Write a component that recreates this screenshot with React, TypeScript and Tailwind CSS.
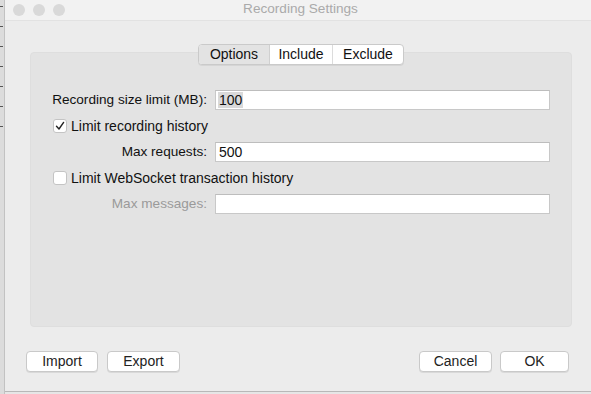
import React from "react";

const font = { fontFamily: '"Liberation Sans", Arial, Helvetica, sans-serif' };

function Btn({ label, w }: { label: string; w: string }) {
  return (
    <div
      className={`${w} h-[21px] flex items-center justify-center bg-white border border-[#c9c9c9] rounded-[4px] text-[14px] text-[#222] shadow-[0_1px_0_rgba(0,0,0,0.08)]`}
    >
      {label}
    </div>
  );
}

function Field({ value, selected }: { value?: string; selected?: boolean }) {
  return (
    <div className="flex-1 h-[20px] bg-white border border-[#c8c8c8] border-t-[#bdbdbd] flex items-center pl-[2px] text-[14px] text-[#111]">
      {value ? (
        <span className={selected ? "bg-[#d9d9d9] px-[1px] leading-[16px]" : "px-[1px] leading-[16px]"}>{value}</span>
      ) : null}
    </div>
  );
}

function Check({ checked }: { checked?: boolean }) {
  return (
    <div className="w-[14px] h-[14px] bg-white border border-[#c4c4c4] rounded-[3px] flex items-center justify-center">
      {checked ? (
        <svg width="10" height="10" viewBox="0 0 10 10">
          <path d="M1.5 5.2 L4 8 L8.6 1.4" fill="none" stroke="#222" strokeWidth="1.4" strokeLinecap="round" strokeLinejoin="round" />
        </svg>
      ) : null}
    </div>
  );
}

export default function App() {
  const ticks = [7, 27, 47, 67, 87, 107, 127];
  return (
    <div className="w-[591px] h-[394px] flex bg-[#ececec] overflow-hidden" style={font}>
      {/* left strip */}
      <div className="w-[4px] h-full bg-[#dcdcdc] flex flex-col">
        {ticks.map((t, i) => (
          <div key={i} className="h-[20px] flex flex-col justify-start pt-[6px]">
            <div className="w-[3px] h-[1px] bg-[#555]" />
          </div>
        ))}
      </div>
      <div className="w-[1px] h-full bg-[#c2c2c2]" />
      {/* window */}
      <div className="flex-1 flex flex-col h-full">
        <div className="h-[392px] flex flex-col bg-[#ececec] border-b border-[#b8b8b8]">
          {/* title bar */}
          <div className="h-[21px] flex items-center bg-[#f2f2f2] border-b border-[#e2e2e2] relative">
            <div className="flex gap-[8px] pl-[8px]">
              <div className="w-[12px] h-[12px] rounded-full bg-[#d9d9d9]" />
              <div className="w-[12px] h-[12px] rounded-full bg-[#d9d9d9]" />
              <div className="w-[12px] h-[12px] rounded-full bg-[#d9d9d9]" />
            </div>
            <div className="flex-1 text-center text-[13.6px] text-[#aaaaaa] pr-[63px] pl-[8px] -mt-[1px]">Recording Settings</div>
          </div>
          {/* body */}
          <div className="flex-1 flex flex-col pl-[25px] pr-[19px] pt-[23px]">
            <div className="flex justify-center relative z-10">
              <div className="flex h-[21px] rounded-[4px] border border-[#cacaca] bg-white text-[14px] text-[#111] shadow-[0_1px_0_rgba(0,0,0,0.06)] overflow-hidden">
                <div className="w-[71px] flex items-center justify-center bg-[#e3e3e3] border-r border-[#d0d0d0]">Options</div>
                <div className="w-[63px] flex items-center justify-center border-r border-[#dcdcdc]">Include</div>
                <div className="w-[70px] flex items-center justify-center">Exclude</div>
              </div>
            </div>
            <div className="-mt-[13px] h-[275px] bg-[#e3e3e3] rounded-[4px] border border-[#dedede] pt-[37px] pl-[21px] pr-[21px] flex flex-col gap-[6px] text-[14px] text-[#111]">
              <div className="flex items-center gap-[8px] h-[20px]">
                <div className="w-[155px] text-right whitespace-nowrap text-[13.6px]">Recording size limit (MB):</div>
                <Field value="100" selected />
              </div>
              <div className="flex items-center gap-[4px] h-[20px] pl-[1px]">
                <Check checked />
                <span>Limit recording history</span>
              </div>
              <div className="flex items-center gap-[8px] h-[20px]">
                <div className="w-[155px] text-right whitespace-nowrap text-[13.6px]">Max requests:</div>
                <Field value="500" />
              </div>
              <div className="flex items-center gap-[4px] h-[20px] pl-[1px]">
                <Check />
                <span>Limit WebSocket transaction history</span>
              </div>
              <div className="flex items-center gap-[8px] h-[20px]">
                <div className="w-[155px] text-right whitespace-nowrap text-[13.6px] text-[#9a9a9a]">Max messages:</div>
                <Field />
              </div>
            </div>
            <div className="flex items-center mt-[24px] -ml-[4px] mr-[3px]">
              <div className="flex gap-[9px]">
                <Btn label="Import" w="w-[72px]" />
                <Btn label="Export" w="w-[73px]" />
              </div>
              <div className="flex-1" />
              <div className="flex gap-[8px]">
                <Btn label="Cancel" w="w-[73px]" />
                <Btn label="OK" w="w-[69px]" />
              </div>
            </div>
          </div>
        </div>
        <div className="flex-1 bg-[#e6e6e6]" />
      </div>
    </div>
  );
}
